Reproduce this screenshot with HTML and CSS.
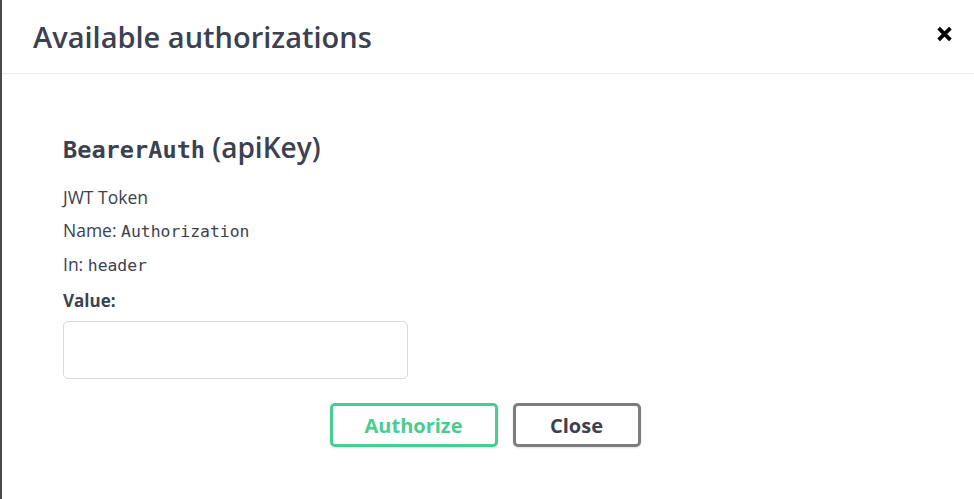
FILE: index.html
```html
<!DOCTYPE html>
<html lang="en">
<head>
<meta charset="utf-8">
<title>Available authorizations</title>
<link rel="stylesheet" href="styles.css">
</head>
<body>
<div class="modal">
  <div class="modal-header">
    <h3 class="modal-title">Available authorizations</h3>
    <button class="close-modal" aria-label="Close">
      <svg width="17" height="16" viewBox="0 0 20 19"><path d="M3 2.5 L17 16.5 M17 2.5 L3 16.5" stroke="#000" stroke-width="4.4" stroke-linecap="butt"/></svg>
    </button>
  </div>
  <div class="modal-content">
    <div class="auth-section">
      <h4 class="auth-name"><code>BearerAuth</code>&nbsp;(apiKey)</h4>
      <p class="line">JWT Token</p>
      <p class="line">Name: <code>Authorization</code></p>
      <p class="line">In: <code>header</code></p>
      <label class="value-label">Value:</label>
      <input class="value-input" type="text">
    </div>
    <div class="btn-wrapper">
      <button class="btn btn-authorize">Authorize</button>
      <button class="btn btn-close">Close</button>
    </div>
  </div>
</div>
</body>
</html>
```
FILE: styles.css
```css
html, body {
  margin: 0;
  height: 100%;
}
body {
  background: #4b4b4b;
  font-family: "Open Sans", "Noto Sans", sans-serif;
  color: #3b4151;
}
.modal {
  margin-left: 2px;
  min-height: 100%;
  background: #fff;
}
.modal-header {
  height: 73px;
  border-bottom: 1px solid #ebebeb;
  display: flex;
  align-items: center;
  justify-content: space-between;
  padding: 0 21px 0 31px;
  box-sizing: content-box;
}
.modal-title {
  margin: 0;
  font-size: 29px;
  font-weight: 600;
  color: #3b4151;
  line-height: 1;
}
.close-modal {
  align-self: flex-start;
  margin-top: 26px;
  border: 0;
  background: none;
  padding: 0;
  width: 17px;
  height: 16px;
  display: flex;
  cursor: pointer;
}
.modal-content {
  padding: 58px 61px 0 61px;
}
.auth-name {
  margin: 0;
  height: 30px;
  margin-bottom: 19px;
  font-size: 28px;
  font-weight: 600;
  line-height: 30px;
}
.auth-name code {
  font-family: "DejaVu Sans Mono", "Liberation Mono", monospace;
  font-size: 23.6px;
  font-weight: bold;
}
.line {
  margin: 0;
  font-size: 17.5px;
  line-height: 33px;
}
.line code {
  font-family: "DejaVu Sans Mono", "Liberation Mono", monospace;
  font-size: 16.4px;
}
.value-label {
  display: block;
  font-size: 17px;
  font-weight: 700;
  line-height: 22px;
  margin-top: 8px;
}
.value-input {
  display: block;
  box-sizing: border-box;
  width: 345px;
  height: 58px;
  margin-top: 9px;
  border: 1px solid #d9d9d9;
  border-radius: 5px;
  padding: 8px 12px;
  font-size: 16px;
  outline: none;
}
.btn-wrapper {
  display: flex;
  justify-content: center;
  gap: 15px;
  margin-top: 24px;
  padding-right: 6px;
}
.btn {
  box-sizing: border-box;
  height: 44px;
  border-radius: 5px;
  background: transparent;
  font-family: "Open Sans", "Noto Sans", sans-serif;
  font-size: 20px;
  font-weight: 700;
  box-shadow: 0 1px 2px rgba(0,0,0,.12);
  cursor: pointer;
  padding: 0;
}
.btn-authorize {
  width: 168px;
  border: 3px solid #49cc90;
  color: #49cc90;
}
.btn-close {
  width: 128px;
  border: 3px solid #7d7d7d;
  color: #3b4151;
}
```
